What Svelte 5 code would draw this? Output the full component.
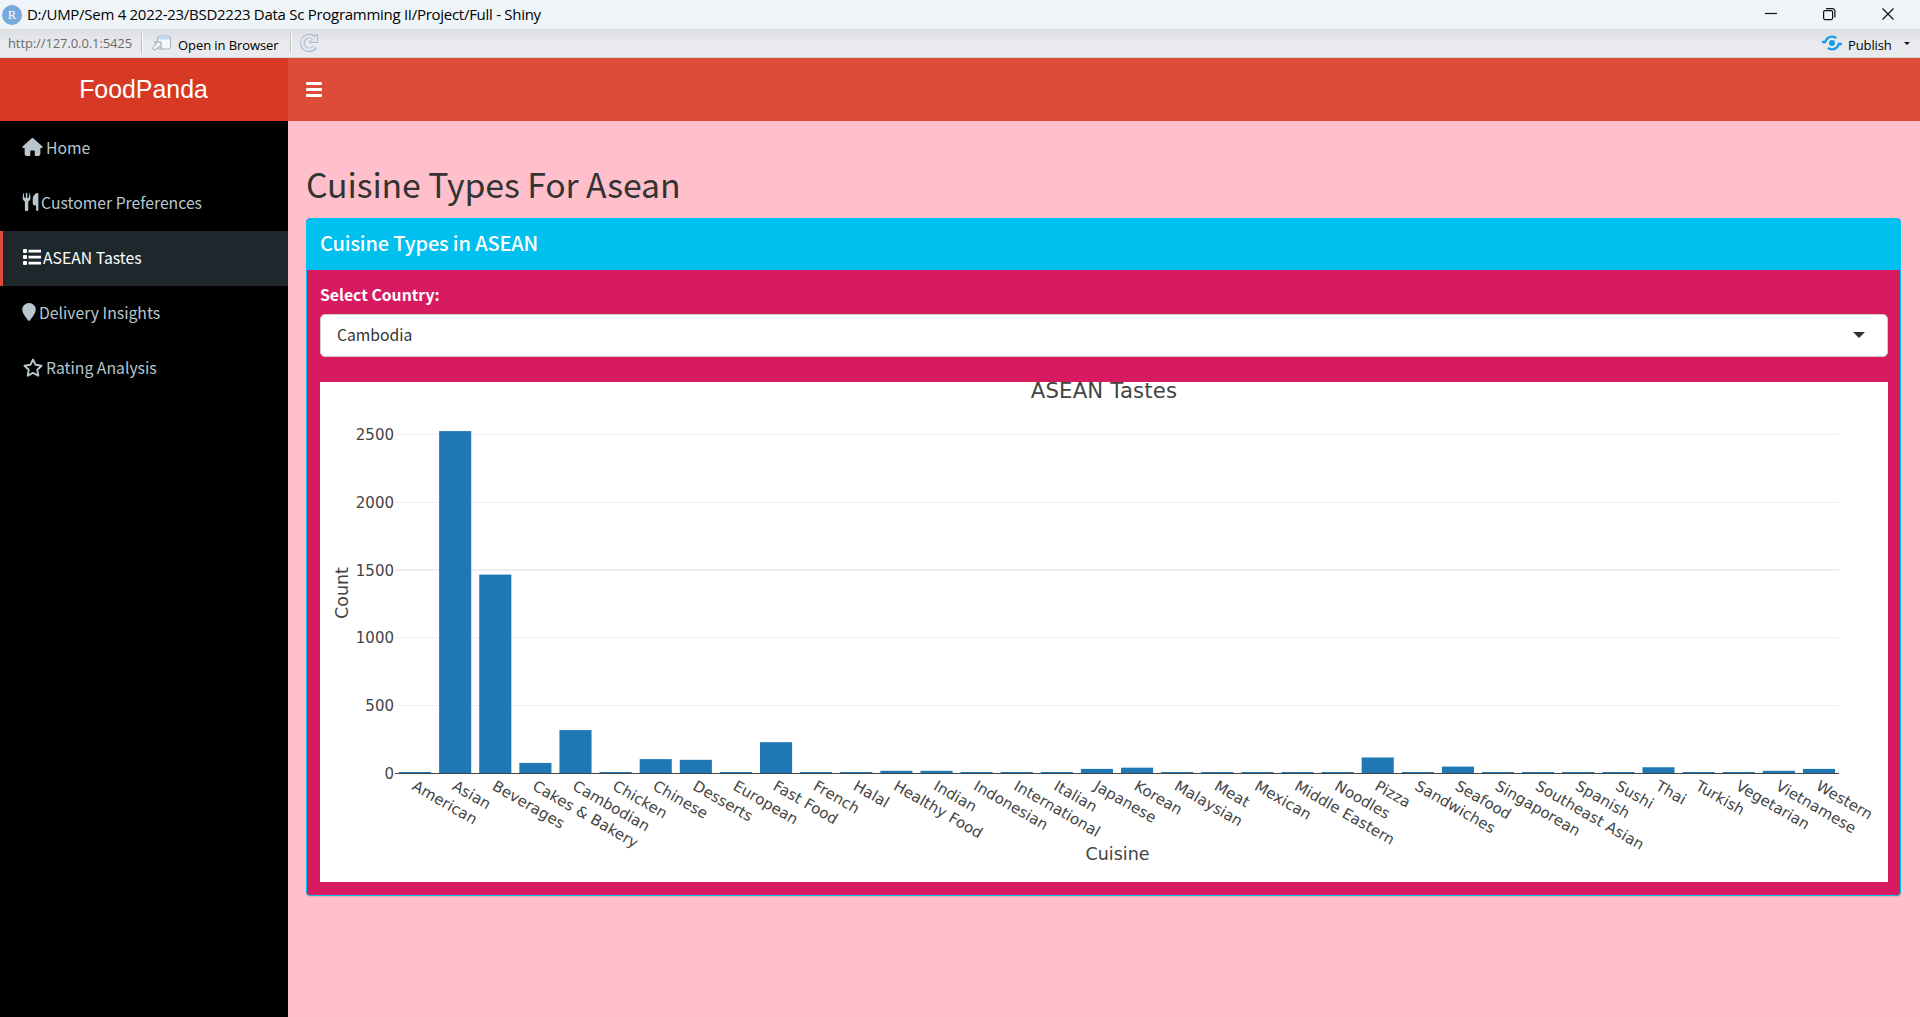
<script>
  const data = [
    ['American', 5], ['Asian', 2525], ['Beverages', 1467], ['Cakes & Bakery', 78],
    ['Cambodian', 320], ['Chicken', 5], ['Chinese', 106], ['Desserts', 101],
    ['European', 5], ['Fast Food', 231], ['French', 5], ['Halal', 5],
    ['Healthy Food', 20], ['Indian', 20], ['Indonesian', 5], ['International', 5],
    ['Italian', 5], ['Japanese', 34], ['Korean', 43], ['Malaysian', 5],
    ['Meat', 5], ['Mexican', 5], ['Middle Eastern', 5], ['Noodles', 5],
    ['Pizza', 118], ['Sandwiches', 5], ['Seafood', 51], ['Singaporean', 5],
    ['Southeast Asian', 5], ['Spanish', 5], ['Sushi', 5], ['Thai', 46],
    ['Turkish', 5], ['Vegetarian', 5], ['Vietnamese', 20], ['Western', 34],
  ];
  const x0 = 75;
  const y0 = 391.5;
  const step = 1444 / data.length;
  const scale = 67.8 / 500;
  const ticks = [
    [2500, 52.5, 1], [2000, 120.5, 1], [1500, 188, 2], [1000, 255.5, 1], [500, 323.5, 1],
  ];
  const bars = data.map(([name, n], i) => {
    const h = Math.max(n * scale, 1.5);
    return { name, h, x: x0 + i * step + step * 0.1, c: x0 + (i + 0.5) * step };
  });
</script>

<div class="window">
  <header class="titlebar">
    <svg class="rlogo" viewBox="0 0 20 20"><circle cx="10" cy="10" r="10" fill="#75aadb" /><text x="10" y="14.2" text-anchor="middle">R</text></svg>
    <span class="title">D:/UMP/Sem 4 2022-23/BSD2223 Data Sc Programming II/Project/Full - Shiny</span>
    <svg class="controls" viewBox="0 0 150 29" fill="none" stroke="#111" stroke-width="1.2">
      <path d="M15 13.5h12" />
      <rect x="73.6" y="10.6" width="9" height="9" rx="1.5" />
      <path d="M76 8.6h6.5a2.4 2.4 0 0 1 2.4 2.4v6.500" />
      <path d="M132.500 8.500l11 11M143.500 8.500l-11 11" />
    </svg>
  </header>

  <div class="toolbar">
    <span class="url">http://127.0.0.1:5425</span>
    <i class="sep"></i>
    <svg class="open" viewBox="0 0 20 16" fill="none">
      <rect x="5.500" y="1" width="13" height="13" rx="2" fill="#f6f8fa" stroke="#9fb4c8" />
      <path d="M6 4.500V3q0-1.500 1.500-1.500h9q1.500 0 1.500 1.500v1.500z" fill="#bddcf3" />
      <path d="M1.500 14.500l-.9-1.800 3.600-3.600L2.500 7h6.500v6.500l-2-2.200L3.500 15z" fill="#f3f5f7" stroke="#8796a5" stroke-width=".9" />
    </svg>
    <span class="label">Open in Browser</span>
    <i class="sep second"></i>
    <svg class="reload" viewBox="0 0 20 20" fill="none">
      <path d="M16 14.200A7 7 0 1 1 15 4.800" stroke="#a9b7c8" stroke-width="4.600" />
      <path d="M18.500 1v8.500h-8.500z" fill="#dfe7f2" stroke="#a9b7c8" />
      <path d="M15.500 14A6.800 6.800 0 1 1 15 5.200" stroke="#dfe7f2" stroke-width="2.800" />
    </svg>
    <span class="spacer"></span>
    <svg class="pub" viewBox="0 0 20 16" fill="none" stroke="#1a9ae8" stroke-width="2.300">
      <circle cx="10" cy="8" r="3" fill="#1a9ae8" stroke="none" />
      <path d="M0 7h3.200C4.500 3.500 7 1.700 10 1.700q2.300 0 4.300 1.500" />
      <path d="M20 9h-3.200C15.500 12.500 13 14.300 10 14.300q-2.300 0-4.300-1.500" />
    </svg>
    <span class="publish">Publish</span>
    <i class="drop"></i>
  </div>

  <div class="navbar">
    <div class="brand">FoodPanda</div>
    <div class="bar"><span class="burger"><i></i><i></i><i></i></span></div>
  </div>

  <div class="body">
    <nav>
      <a class="item home"><svg viewBox="0 0 576 512"><path d="M575.800 255.500c0 18-15 32.100-32 32.100h-32l.7 160.200c0 35-20 64.200-56 64.200h-72c-22 0-32-14-32-32v-96c0-17.700-14.300-32-32-32h-64c-17.700 0-32 14.300-32 32v96c0 18-12 32-32 32h-72c-33 0-56-25-56-56V287.600H32c-18 0-32-14-32-32.100 0-9 3-17 10-24L266.400 8c7-7 15-8 22-8s15 2 21 7l255.400 224.500c8 7 12 15 11 24z" /></svg><span>Home</span></a>
      <a class="item prefs"><svg viewBox="0 0 448 512"><path d="M16 5Q18 0 25 0t8 6l12 131q2 8 9 8t8-8L74 8q1-8 9-8h58q8 0 9 8l12 129q1 8 8 8t9-8L191 6q1-6 8-6t9 5l16 145q0 70-64 95v235q0 32-32 32h-32q-32 0-32-32V245Q0 220 0 150zM448 32v448q0 32-32 32t-32-32V352h-32q-64 0-64-64V176C288 80 370 0 416 0q32 0 32 32z" /><path class="cut" d="M72 0h20v135H66zM132 0h20l6 135h-26z" /></svg><span>Customer Preferences</span></a>
      <a class="item active"><svg viewBox="0 0 18 16"><path d="M0 1q0-1 1-1h2q1 0 1 1v2q0 1-1 1H1Q0 4 0 3zM0 7q0-1 1-1h2q1 0 1 1v2q0 1-1 1H1Q0 10 0 9zM0 13q0-1 1-1h2q1 0 1 1v2q0 1-1 1H1q-1 0-1-1zM5.500 .8H18v2.600H5.500zM5.500 6.800H18v2.600H5.500zM5.500 12.800H18v2.600H5.500z" /></svg><span>ASEAN Tastes</span></a>
      <a class="item pin"><svg viewBox="0 0 384 512"><path d="M384 192c0 87.400-117 243-168.300 307.200-12.300 15.300-35.100 15.300-47.400 0C117 435 0 279.400 0 192 0 86 86 0 192 0s192 86 192 192z" /></svg><span>Delivery Insights</span></a>
      <a class="item star"><svg viewBox="0 0 20 19"><path d="M10 1.500l2.600 5.300 5.900.9-4.200 4.100 1 5.900-5.300-2.800-5.300 2.800 1-5.900L1.500 7.700l5.900-.9z" /></svg><span>Rating Analysis</span></a>
    </nav>

    <main>
      <h1>Cuisine Types For Asean</h1>
      <section class="box">
        <div class="box-head">Cuisine Types in ASEAN</div>
        <div class="box-body">
          <div class="field">Select Country:</div>
          <div class="select"><span>Cambodia</span><i></i></div>
          <svg class="chart" viewBox="0 0 1568 500">
            <text class="chart-title" x="784" y="15.500" text-anchor="middle">ASEAN Tastes</text>
            {#each ticks as [n, y, w]}
              <rect x="75" y={y - w / 2} width="1444" height={w} fill="#eee" />
              <text class="tick" x="74" y={y + 5.500} text-anchor="end">{n}</text>
            {/each}
            <text class="tick" x="74" y="397" text-anchor="end">0</text>
            {#each bars as b}
              <rect x={b.x} y={y0 - b.h} width={step * 0.8} height={b.h} fill="#1f77b4" />
              <text class="tick slanted" transform="translate({b.c - 4} {407}) rotate(30)">{b.name}</text>
            {/each}
            <rect x="75" y="391" width="1444" height="1" fill="#444" />
            <text class="axis" x="797.500" y="478" text-anchor="middle">Cuisine</text>
            <text class="axis" transform="translate(28 211) rotate(-90)" text-anchor="middle">Count</text>
          </svg>
        </div>
      </section>
    </main>
  </div>
</div>

<style>
  :global(body) { margin: 0; overflow: hidden; }
  .window { width: 1920px; height: 1017px; display: flex; flex-direction: column; overflow: hidden; font-family: "Noto Sans CJK SC", "Open Sans", sans-serif; }
  .titlebar { height: 29px; background: #eff4f9; display: flex; align-items: center; font-family: "Open Sans", "Noto Sans", sans-serif; color: #000; }
  .rlogo { width: 20px; height: 20px; margin-left: 2px; }
  .rlogo text { font: 12.5px "Liberation Serif", serif; fill: #fff; }
  .title { margin-left: 5px; padding-bottom: 2px; font-size: 15px; letter-spacing: -0.280px; white-space: nowrap; }
  .controls { width: 150px; height: 29px; margin-left: auto; margin-right: 20px; }
  .toolbar { height: 29px; box-sizing: border-box; display: flex; align-items: center; background: linear-gradient(#dcdee2, #e9eaed 50%, #e9eaed); border-bottom: 1px solid #d3d5d9; font: 13px "Open Sans", "Noto Sans", sans-serif; white-space: nowrap; }
  .url { width: 133px; padding-left: 8px; color: #6b6b6b; letter-spacing: -0.1px; }
  .sep { width: 1px; height: 20px; background: #bfc1c5; border-right: 1px solid #fafafa; }
  .open { width: 20px; height: 16px; margin-left: 9px; }
  .label { margin-left: 6px; width: 112px; letter-spacing: -0.080px; padding-top: 4px; }
  .reload { width: 20px; height: 20px; margin-left: 7px; }
  .spacer { flex: 1; }
  .pub { width: 20px; height: 16px; }
  .publish { margin-left: 6px; width: 56px; letter-spacing: -0.120px; padding-top: 4px; }
  .drop { margin-right: 10px; border: 3px solid transparent; border-top-color: #111; border-bottom: 0; }
  .navbar { height: 63px; display: flex; flex: none; }
  .brand { width: 287px; padding-right: 1px; height: 63px; background: #d73925; color: #fff; font: 24.900px/63px "Liberation Sans", Arial, sans-serif; text-align: center; }
  .bar { flex: 1; background: #dd4b39; display: flex; align-items: center; padding-left: 18px; }
  .burger { display: flex; flex-direction: column; gap: 3px; }
  .burger i { width: 16px; height: 3px; border-radius: 1px; background: #fff; }
  .body { flex: 1; display: flex; min-height: 0; }
  nav { width: 288px; background: #000; }
  .item { height: 55px; box-sizing: border-box; display: flex; align-items: center; padding: 0 0 3px 22px; color: #b8c7ce; font-size: 15.750px; white-space: nowrap; }
  .item svg { height: 18px; fill: currentColor; flex: none; }
  .item .cut { fill: #000; }
  .home svg { width: 21px; margin-right: 3px; }
  .prefs svg { width: 17px; margin-right: 2px; }
  .active { background: #1e282c; color: #fff; border-left: 3px solid #dd4b39; padding-left: 20px; }
  .active svg { width: 18px; height: 16px; margin-right: 2px; }
  .pin svg { width: 14px; margin-right: 3px; }
  .star svg { width: 20px; height: 19px; margin-left: 1px; margin-right: 3px; fill: none; stroke: currentColor; stroke-width: 1.900; stroke-linejoin: round; }
  main { flex: 1; background: #ffc0cb; padding: 41px 19px 0 18px; }
  h1 { margin: 0; height: 56px; font-size: 33.800px; line-height: 44px; letter-spacing: -0.110px; font-weight: 400; color: #333; white-space: nowrap; }
  .box { height: 678px; box-sizing: border-box; border: 1px solid #00c0ef; border-radius: 4px; background: #d81b60; box-shadow: 0 1px 1px rgba(0, 0, 0, 0.1); overflow: hidden; }
  .box-head { height: 51px; background: #00c0ef; color: #fff; font-size: 20px; letter-spacing: -0.150px; line-height: 48px; padding-left: 13px; font-weight: 500; }
  .box-body { padding: 12px 12px 0 13px; display: flex; flex-direction: column; }
  .field { height: 32px; line-height: 26px; font-size: 15.750px; font-weight: 700; color: #fff; }
  .select { height: 43px; box-sizing: border-box; border: 1px solid #ccc; border-radius: 5px; background: #fff; display: flex; align-items: center; justify-content: space-between; padding: 0 22px 3px 16px; font-size: 15.700px; color: #333; }
  .select i { position: relative; top: 1px; border: 6px solid transparent; border-top-color: #333; border-bottom: 0; }
  .chart { margin-top: 25px; width: 1568px; height: 500px; background: #fff; font-family: "DejaVu Sans", Verdana, sans-serif; fill: #444; }
  .chart-title { font-size: 21.250px; letter-spacing: 0.150px; }
  .tick { font-size: 15px; }
  .slanted { letter-spacing: 0.080px; }
  .axis { font-size: 17.500px; }
</style>
